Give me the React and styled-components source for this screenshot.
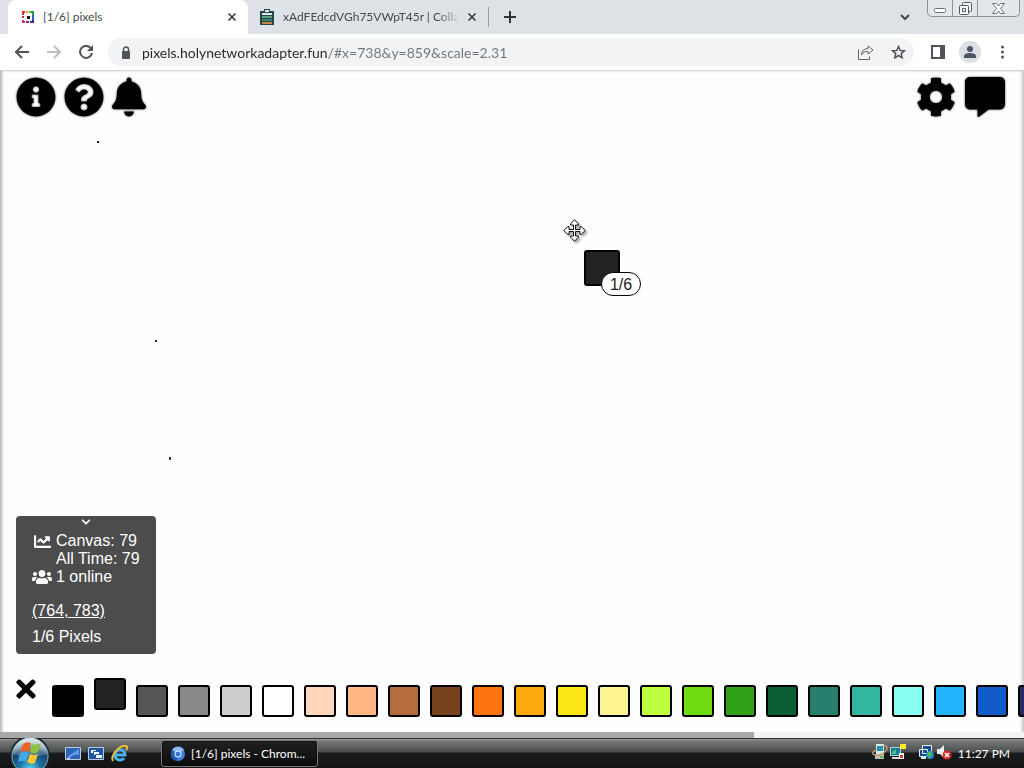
import React from "react";
import styled, { createGlobalStyle } from "styled-components";
import {
  FaInfoCircle, FaQuestionCircle, FaBell, FaCog, FaCommentAlt,
  FaTimes, FaChevronDown, FaChartLine, FaUsers,
} from "react-icons/fa";

const GlobalStyle = createGlobalStyle`
  * { box-sizing: border-box; }
  body { margin: 0; overflow: hidden; }
  button { border: 0; padding: 0; background: none; color: inherit; font: inherit; cursor: pointer; }
  svg { display: block; flex: none; }
`;

const ui = `Lato, "Segoe UI", sans-serif`;
const arial = `"Liberation Sans", Arial, sans-serif`;

const Desktop = styled.div`
  display: flex;
  flex-direction: column;
  height: 100vh;
  font-family: ${ui};
  background: #fff;
`;

/* Browser tabs */
const TabStrip = styled.header`
  display: flex;
  align-items: stretch;
  height: 34px;
  flex: none;
  padding-left: 8px;
  background: #dee1e6;
  color: #3c4043;
`;
const Tab = styled.div`
  display: flex;
  align-items: center;
  gap: 9px;
  width: 240px;
  padding: 0 10px 0 12px;
  background: ${(p) => (p.$active ? "#fff" : "transparent")};
  border-radius: 8px 8px 0 0;
`;
const TabTitle = styled.button`
  flex: 1;
  min-width: 0;
  overflow: hidden;
  white-space: nowrap;
  text-align: left;
  font-size: 12px;
  line-height: 20px;
  color: #45494d;
  mask-image: ${(p) => (p.$fade ? "linear-gradient(90deg, #000 88%, #0003)" : "none")};
`;
const TabDivider = styled.i`
  align-self: center;
  width: 1px;
  height: 20px;
  background: #9a9da2;
`;
const IconButton = styled.button`
  display: grid;
  place-items: center;
  width: ${(p) => p.$w || 32}px;
  height: ${(p) => p.$h || 34}px;
  flex: none;
`;
const CloseTab = styled(IconButton)`
  width: 12px;
`;
const Spacer = styled.div`
  flex: 1;
`;
const WindowButtons = styled.div`
  display: flex;
  height: 17px;
  margin: 0 4px 0 6px;
  border: 1px solid #8d9197;
  border-top: 0;
  border-radius: 0 0 5px 5px;
  background: #e4e7eb;
  button + button { border-left: 1px solid #8d9197; }
`;

/* Address bar */
const Toolbar = styled.nav`
  display: flex;
  align-items: center;
  height: 37px;
  flex: none;
  padding: 0 6px;
  border-bottom: 1px solid #d4d6d8;
  background: #fff;
  color: #53575b;
`;
const AddressBar = styled.label`
  display: flex;
  align-items: center;
  flex: 1;
  height: 28px;
  margin: 0 8px 0 6px;
  padding-left: 13px;
  border-radius: 14px;
  background: #f1f3f4;
`;
const Address = styled.input`
  flex: 1;
  min-width: 0;
  height: 24px;
  margin-left: 11px;
  padding: 0;
  border: 0;
  outline: 0;
  font-family: ${ui};
  font-size: 14px;
  background: linear-gradient(90deg, #25282b 187px, #70757a 187px);
  background-clip: text;
  -webkit-text-fill-color: transparent;
`;
const Avatar = styled.button`
  display: grid;
  place-items: center;
  width: 22px;
  height: 22px;
  margin: 0 5px;
  border-radius: 50%;
  background: #dcdfe3;
`;

/* Page */
const Page = styled.main`
  position: relative;
  display: flex;
  flex-direction: column;
  flex: 1;
  min-height: 0;
  overflow: hidden;
  background: #fefefe;
  box-shadow: inset 3px 0 3px -1px #b4b4b4, inset -3px 0 3px -1px #c4c4c4;
  font-family: ${arial};
`;
const PageTools = styled.div`
  display: flex;
  gap: 8px;
  padding: 6px 18px 0 16px;
`;
const ToolButton = styled.button`
  width: ${(p) => p.$w || 40}px;
  height: 40px;
  color: #000;
  filter: drop-shadow(0 0 1px #555);
  svg { width: 100%; height: 100%; }
`;
const InfoPanel = styled.section`
  display: flex;
  flex-direction: column;
  width: 140px;
  height: 138px;
  margin: 0 0 24px 16px;
  border-radius: 4px;
  background: #4c4c4c;
  color: #fff;
  font-size: 16px;
  line-height: 18px;
`;
const Collapse = styled.button`
  display: grid;
  place-items: center;
  height: 12px;
`;
const Stats = styled.div`
  display: grid;
  grid-template-columns: 20px auto;
  grid-auto-rows: 18px;
  column-gap: 4px;
  align-items: center;
  padding: 4px 0 0 16px;
  white-space: nowrap;
  svg { justify-self: center; }
  span { grid-column: 2; }
`;
const Coordinates = styled.a`
  margin: 16px 0 0 16px;
  color: #fff;
`;
const PixelCount = styled.div`
  margin: 8px 0 0 16px;
`;
const Palette = styled.div`
  display: flex;
  align-items: flex-end;
  gap: 10px;
  height: 39px;
  flex: none;
  margin-bottom: 15px;
  padding-left: 16px;
  overflow: hidden;
`;
const Deselect = styled.button`
  display: flex;
  align-items: center;
  justify-content: center;
  align-self: flex-start;
  width: 20px;
  height: 22px;
  margin-right: 6px;
  color: #000;
`;
const Swatch = styled.button`
  width: 32px;
  height: 32px;
  flex: none;
  align-self: ${(p) => (p.$selected ? "flex-start" : "flex-end")};
  border: 2px solid #000;
  border-radius: 3px;
  background: ${(p) => p.$color};
`;
const ScrollTrack = styled.div`
  height: 6px;
  flex: none;
  background: #f3f3f3;
`;
const ScrollThumb = styled.div`
  width: 73.6%;
  height: 100%;
  background: #a8a8a8;
`;

/* Things placed on the drawing canvas */
const Pixel = styled.i`
  position: absolute;
  left: ${(p) => p.$x}px;
  top: ${(p) => p.$y}px;
  width: 2px;
  height: ${(p) => p.$h || 2}px;
  background: ${(p) => p.$color};
`;
const MoveCursor = styled.svg`
  position: absolute;
  left: 563px;
  top: 148px;
  filter: drop-shadow(2px 2px 1px #0005);
`;
const HeldPixel = styled.div`
  position: absolute;
  left: 584px;
  top: 179px;
  width: 36px;
  height: 36px;
  border: 2px solid #000;
  border-radius: 3px;
  background: #222;
`;
const HeldCount = styled.span`
  position: absolute;
  left: 15px;
  top: 20px;
  width: 40px;
  height: 24px;
  border: 1px solid #000;
  border-radius: 12px;
  background: #fff;
  color: #222;
  font-size: 16px;
  line-height: 24px;
  text-align: center;
`;

/* Taskbar */
const Taskbar = styled.footer`
  display: flex;
  align-items: center;
  height: 30px;
  flex: none;
  padding: 0 14px 0 8px;
  border-top: 1px solid #303232;
  background: linear-gradient(#989a9a 0, #777979 2px, #4b4d4d 13px, #1a1b1c 14px, #131415 100%);
  color: #fff;
  font-size: 12px;
`;
const Start = styled.button`
  height: 36px;
  margin: -4px 15px -4px 0;
`;
const QuickLaunch = styled.div`
  display: flex;
  align-items: center;
  gap: 7px;
  margin-right: 32px;
`;
const Task = styled.button`
  display: flex;
  align-items: center;
  gap: 5px;
  width: 157px;
  height: 27px;
  padding: 0 8px;
  border: 1px solid #777;
  border-radius: 3px;
  background: linear-gradient(#1f2020, #0b0b0b);
  box-shadow: inset 0 0 2px #000;
  white-space: nowrap;
`;
const Tray = styled.div`
  display: flex;
  align-items: center;
  gap: 2px;
  svg { margin-bottom: 4px; }
`;
const TrayGap = styled.i`
  width: 8px;
`;
const Clock = styled.time`
  margin-left: 4px;
  white-space: nowrap;
`;

const COLORS = [
  ["Black", "#000000"], ["Dark Grey", "#222222"], ["Deep Grey", "#555555"],
  ["Medium Grey", "#888888"], ["Light Grey", "#cdcdcd"], ["White", "#ffffff"],
  ["Beige", "#ffd5bc"], ["Peach", "#ffb783"], ["Brown", "#b66d3d"],
  ["Chocolate", "#77431f"], ["Rust", "#fc7510"], ["Orange", "#fca80e"],
  ["Yellow", "#fde817"], ["Pastel Yellow", "#fff491"], ["Lime", "#beff40"],
  ["Green", "#70dd13"], ["Dark Green", "#31a117"], ["Forest", "#0b5f35"],
  ["Dark Teal", "#277e6c"], ["Light Teal", "#32b69f"], ["Aqua", "#88fff3"],
  ["Azure", "#24b5fe"], ["Blue", "#125cc7"], ["Navy", "#262960"],
];

const Cross = ({ size = 8 }) => (
  <svg width={size} height={size} viewBox="0 0 8 8"><path d="M0.5 0.5l7 7M7.5 0.5l-7 7" stroke="#303438" strokeWidth="1.5" /></svg>
);

const PixelsFavicon = () => (
  <svg width="14" height="12" viewBox="-2 0 14 12">
    <path fill="#e42c22" d="M0 0h3v2H2v2H0zM0 5h2v2H0z" />
    <path fill="#f39a20" d="M4 0h2v2H4z" />
    <path fill="#6bbf2c" d="M7 0h2v2H7z" />
    <path fill="#1c9d53" d="M9 0h3v4h-2V2H9z" />
    <path fill="#1f67c9" d="M10 4h2v5h-2z" />
    <path fill="#462a94" d="M10 9h2v3H8v-2h2z" />
    <path fill="#8d2393" d="M4 10h3v2H4z" />
    <path fill="#d03672" d="M0 9h2v1h1v2H0z" />
    <path fill="#111" d="M5 5h3v3H5z" />
  </svg>
);

const ClipboardIcon = () => (
  <svg width="14" height="16" viewBox="0 0 14 16">
    <path fill="#24484a" d="M0 2h4V0h6v2h4v14H0z" />
    <path fill="#dfe8e6" d="M5 1h4v2H5zM2 4h10v2H2z" />
    <path fill="#5fa17e" d="M2 7h10v2H2z" />
    <path fill="#3d8068" d="M2 10h10v2H2z" />
    <path fill="#c98542" d="M2 13h10v2H2z" />
  </svg>
);

const StartOrb = () => (
  <svg width="42" height="36" viewBox="0 0 42 36">
    <defs>
      <radialGradient id="orb" cx="50%" cy="90%" r="80%">
        <stop offset="0" stopColor="#5fe0f8" /><stop offset=".4" stopColor="#1b70a4" />
        <stop offset=".75" stopColor="#194567" /><stop offset="1" stopColor="#83a3b5" />
      </radialGradient>
      <linearGradient id="gloss" x2="0" y2="1">
        <stop offset="0" stopColor="#fff" stopOpacity=".75" /><stop offset="1" stopColor="#fff" stopOpacity=".1" />
      </linearGradient>
    </defs>
    <circle cx="22" cy="20" r="20" fill="#17272f" />
    <circle cx="22" cy="20" r="18" fill="url(#orb)" stroke="#8aa8b6" />
    <path d="M5 18a17 16 0 0 1 34 0q-17 6-34 0z" fill="url(#gloss)" />
    <path fill="#ee6328" d="M15 8q4-3 8-1l-2 9q-4-2-9 0z" />
    <path fill="#8bc53f" d="M24 8q4 2 9-1l-3 9q-4 3-8 0z" />
    <path fill="#43a8e8" d="M12 17q4-2 9 0l-3 9q-4-2-8 0z" />
    <path fill="#fbc62d" d="M22 18q4 2 8 0l-3 9q-4 2-8-1z" />
  </svg>
);

const DesktopIcon = () => (
  <svg width="16" height="14" viewBox="0 0 16 14">
    <path fill="#2d62b8" stroke="#b5cbe3" d="M.5.5h15v12H.5z" />
    <path fill="#5e9be5" d="M3 9L14 2v6q-6-1-9 3H3z" />
    <path fill="#dbe9f8" d="M2 11h3v1H2z" />
  </svg>
);
const SwitcherIcon = () => (
  <svg width="16" height="14" viewBox="0 0 16 14">
    <path fill="#1d55a2" stroke="#b5cbe3" d="M.5.5h15v12H.5z" />
    <path fill="#eef6ff" d="M3 3h5v3H3zM6 5h5v3H6zM8 8h6v3H8z" />
    <path fill="none" stroke="#1d55a2" d="M5.500 6V4.500H9M7.500 9V7.500H12" />
  </svg>
);
const ExplorerIcon = () => (
  <svg width="18" height="18" viewBox="0 0 18 18" fill="none">
    <path d="M4 10h10c0-7-10-7-10 0 0 6 7 6 9 3" stroke="#46b3ee" strokeWidth="3" />
    <path d="M2 16C-1 11 9-1 15 1c2 1 1 3 0 4" stroke="#f2bd36" strokeWidth="2" />
  </svg>
);
const ChromiumIcon = () => (
  <svg width="16" height="16" viewBox="0 0 16 16">
    <circle cx="8" cy="8" r="7" fill="#3e7fe0" />
    <path fill="#8cb8f8" d="M8 8L2 4a7 7 0 0 1 12 0z" />
    <path fill="#235bb8" d="M8 8l-6-4a7 7 0 0 0 5 11z" />
    <circle cx="8" cy="8" r="3.500" fill="#e9f2ff" /><circle cx="8" cy="8" r="2.500" fill="#3979df" />
  </svg>
);
const DeviceTrayIcon = () => (
  <svg width="16" height="16" viewBox="0 0 16 16">
    <path fill="#d4e9eb" d="M4 0h8v10H4z" /><path fill="#2491a7" d="M5 2h6v5H5z" />
    <path fill="#b6c4bc" d="M3 10h9v5H3z" />
    <path d="M5 6Q0 7 1 10q3 3 9 0 6-4 5-7-1-2-4-1" fill="none" stroke="#c99a70" strokeWidth="1.500" />
    <path fill="#57b85e" d="M8 12h4v2H8z" />
  </svg>
);
const MonitorTrayIcon = () => (
  <svg width="16" height="16" viewBox="0 0 16 16">
    <path fill="#a8d7d2" d="M0 3h11v9H0z" /><path fill="#127f91" d="M1 4h9v7H1z" />
    <path fill="#51b88d" d="M2 8l4-3v5H2z" /><path fill="#d3dedb" d="M2 13h8v2H2z" />
    <path fill="#ffe82d" d="M10 0h6v5h-6z" /><path fill="#fff" d="M9 9h5v6H9z" />
    <path fill="#ce4436" d="M10 11h3v3h-3z" />
  </svg>
);
const NetworkTrayIcon = () => (
  <svg width="16" height="16" viewBox="0 0 16 16">
    <path fill="#154e92" stroke="#e6f1f6" d="M4.500 1.500h9v8h-9zM1.500 5.500h8v7h-8z" />
    <path fill="#dbe8ed" d="M3 13h5v2H3z" /><circle cx="12" cy="11" r="4" fill="#268bc5" />
    <path fill="#54bd56" d="M9 10l3-3 2 3-3 4z" />
  </svg>
);
const VolumeTrayIcon = () => (
  <svg width="16" height="16" viewBox="0 0 16 16">
    <path fill="#eee" d="M1 5h3l4-4v13l-4-4H1z" /><circle cx="11" cy="11" r="4.500" fill="#d92f2b" />
    <path d="M9 9l4 4M13 9l-4 4" stroke="#fff" strokeWidth="1.500" />
  </svg>
);

export default function App() {
  return (
    <Desktop>
      <GlobalStyle />
      <TabStrip>
        <Tab $active>
          <PixelsFavicon />
          <TabTitle>[1/6] pixels</TabTitle>
          <CloseTab aria-label="Close tab"><Cross /></CloseTab>
        </Tab>
        <Tab>
          <ClipboardIcon />
          <TabTitle $fade>xAdFEdcdVGh75VWpT45r | Colla</TabTitle>
          <CloseTab aria-label="Close tab"><Cross /></CloseTab>
        </Tab>
        <TabDivider />
        <IconButton $w={42} aria-label="New tab">
          <svg width="12" height="12" viewBox="0 0 12 12"><path d="M6 0v12M0 6h12" stroke="#303438" strokeWidth="2" /></svg>
        </IconButton>
        <Spacer />
        <IconButton $w={32} aria-label="Search tabs">
          <svg width="10" height="7" viewBox="0 0 10 7"><path d="M1 1l4 4 4-4" fill="none" stroke="#44484c" strokeWidth="2" /></svg>
        </IconButton>
        <WindowButtons>
          <IconButton $w={24} $h={16} aria-label="Minimize">
            <svg width="12" height="12" viewBox="0 0 12 12"><rect x=".5" y="6.500" width="11" height="4" rx="1" fill="#fff" stroke="#6c7076" /></svg>
          </IconButton>
          <IconButton $w={25} $h={16} aria-label="Restore">
            <svg width="13" height="13" viewBox="0 0 13 13" fill="#f4f5f7" stroke="#55595f"><rect x="3.500" y=".5" width="9" height="9" rx="1" /><rect x=".5" y="3.500" width="9" height="9" rx="1" /><path d="M3.500 6.500h3v3h-3z" /></svg>
          </IconButton>
          <IconButton $w={42} $h={16} aria-label="Close">
            <svg width="13" height="11" viewBox="0 0 13 11"><path d="M.5.5h4l2 2.500 2-2.500h4l-4 5 4 5h-4l-2-2.500-2 2.500h-4l4-5z" fill="#fff" stroke="#6c7076" /></svg>
          </IconButton>
        </WindowButtons>
      </TabStrip>

      <Toolbar>
        <IconButton aria-label="Back">
          <svg width="14" height="14" viewBox="0 0 14 14" fill="none" stroke="#505458" strokeWidth="2"><path d="M14 7H1.500M7 1L1 7l6 6" /></svg>
        </IconButton>
        <IconButton aria-label="Forward">
          <svg width="14" height="14" viewBox="0 0 14 14" fill="none" stroke="#bbbec1" strokeWidth="2"><path d="M0 7h12.500M7 1l6 6-6 6" /></svg>
        </IconButton>
        <IconButton aria-label="Reload">
          <svg width="14" height="14" viewBox="0 0 14 14"><path d="M11.500 2.800A6 6 0 1 0 13 8" fill="none" stroke="#505458" strokeWidth="2" /><path d="M14 0v6H8z" fill="#505458" /></svg>
        </IconButton>
        <AddressBar>
          <svg width="10" height="13" viewBox="0 0 10 13"><path d="M2.500 6V3.500a2.500 2.500 0 0 1 5 0V6" fill="none" stroke="#505458" strokeWidth="1.500" /><rect x="1" y="5" width="8" height="8" rx="1" fill="#505458" /></svg>
          <Address aria-label="Address" defaultValue="pixels.holynetworkadapter.fun/#x=738&y=859&scale=2.31" />
          <IconButton aria-label="Share">
            <svg width="16" height="15" viewBox="0 0 16 15" fill="none" stroke="#606468"><path d="M.5 4.500v10h11v-3M10 1l5 4-5 4V6.500Q5.500 6 3.500 10q0-6 6.500-6.500z" /></svg>
          </IconButton>
          <IconButton aria-label="Bookmark">
            <svg width="15" height="14" viewBox="0 0 15 14"><path d="M7.500 1.500l1.700 4 4.300.3-3.300 2.800 1 4.200-3.700-2.300-3.700 2.300 1-4.200L1.500 5.800l4.300-.3z" fill="none" stroke="#505458" strokeWidth="1.500" /></svg>
          </IconButton>
        </AddressBar>
        <IconButton aria-label="Side panel">
          <svg width="14" height="14" viewBox="0 0 14 14"><path d="M1 1h12v12H1z" fill="none" stroke="#505458" strokeWidth="2" /><path d="M9 1h4v12H9z" fill="#505458" /></svg>
        </IconButton>
        <Avatar aria-label="Profile">
          <svg width="12" height="12" viewBox="0 0 12 12" fill="#465466"><circle cx="6" cy="3" r="3" /><path d="M0 12V9.500Q1 7 6 7t6 2.500V12z" /></svg>
        </Avatar>
        <IconButton aria-label="Menu">
          <svg width="3" height="14" viewBox="0 0 3 14" fill="#505458"><circle cx="1.500" cy="2" r="1.500" /><circle cx="1.500" cy="7" r="1.500" /><circle cx="1.500" cy="12" r="1.500" /></svg>
        </IconButton>
      </Toolbar>

      <Page>
        <PageTools>
          <ToolButton aria-label="Information"><FaInfoCircle /></ToolButton>
          <ToolButton aria-label="Help"><FaQuestionCircle /></ToolButton>
          <ToolButton $w={34} aria-label="Notifications"><FaBell /></ToolButton>
          <Spacer />
          <ToolButton aria-label="Settings"><FaCog /></ToolButton>
          <ToolButton $w={42} aria-label="Chat"><FaCommentAlt /></ToolButton>
        </PageTools>
        <Spacer />
        <InfoPanel>
          <Collapse aria-label="Collapse"><FaChevronDown size={10} /></Collapse>
          <Stats>
            <FaChartLine size={17} /><span>Canvas: 79</span>
            <span>All Time: 79</span>
            <FaUsers size={20} /><span>1 online</span>
          </Stats>
          <Coordinates href="#x=764&y=783">(764, 783)</Coordinates>
          <PixelCount>1/6 Pixels</PixelCount>
        </InfoPanel>
        <Palette>
          <Deselect aria-label="Deselect color"><FaTimes size={28} /></Deselect>
          {COLORS.map(([name, color], i) => (
            <Swatch key={name} aria-label={name} $color={color} $selected={i === 1} />
          ))}
        </Palette>
        <ScrollTrack><ScrollThumb /></ScrollTrack>

        <Pixel $x={97} $y={70} $color="#222" />
        <Pixel $x={155} $y={269} $color="#222a30" />
        <Pixel $x={169} $y={386} $h={3} $color="#24434c" />
        <MoveCursor width="23" height="23" viewBox="0 0 23 23">
          <path d="M11.500.7L15.500 5v1h-3v4.500h4.500v-3h1l4.300 4-4.300 4h-1v-3h-4.500V17h3v1l-4 4.300L7.500 18v-1h3v-4.500H6v3H5l-4.300-4 4.300-4h1v3h4.500V6h-3V5z" fill="#fff" stroke="#111" />
        </MoveCursor>
        <HeldPixel><HeldCount>1/6</HeldCount></HeldPixel>
      </Page>

      <Taskbar>
        <Start aria-label="Start"><StartOrb /></Start>
        <QuickLaunch>
          <button aria-label="Show desktop"><DesktopIcon /></button>
          <button aria-label="Switch windows"><SwitcherIcon /></button>
          <button aria-label="Internet Explorer"><ExplorerIcon /></button>
        </QuickLaunch>
        <Task><ChromiumIcon />[1/6] pixels - Chrom...</Task>
        <Spacer />
        <Tray>
          <DeviceTrayIcon /><MonitorTrayIcon /><TrayGap /><NetworkTrayIcon /><VolumeTrayIcon />
          <Clock>11:27 PM</Clock>
        </Tray>
      </Taskbar>
    </Desktop>
  );
}
